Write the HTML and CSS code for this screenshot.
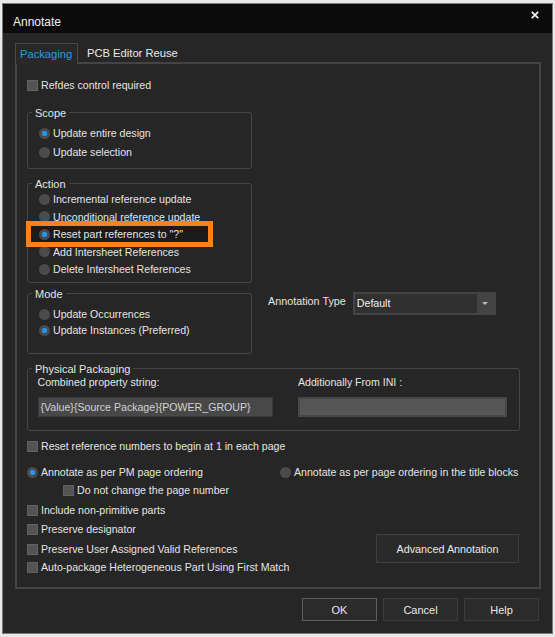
FILE: index.html
```html
<!DOCTYPE html>
<html>
<head>
<meta charset="utf-8">
<title>Annotate</title>
<link rel="stylesheet" href="styles.css">
</head>
<body>
<div class="dialog">
  <div class="titlebar">
    <span class="title">Annotate</span>
    <svg class="close" width="8" height="8" viewBox="0 0 8 8"><path d="M0.8 0.8 L7.2 7.2 M7.2 0.8 L0.8 7.2" stroke="#f2f2f2" stroke-width="1.7"/></svg>
  </div>
  <div class="dialog-body">
    <div class="tabs">
      <span class="tab active">Packaging</span>
      <span class="tab">PCB Editor Reuse</span>
    </div>
    <div class="panel">
      <div class="opt"><span class="check"></span>Refdes control required</div>

      <div class="group scope">
        <span class="group-title">Scope</span>
        <div class="opt"><span class="radio on"></span>Update entire design</div>
        <div class="opt"><span class="radio"></span>Update selection</div>
      </div>

      <div class="group action">
        <span class="group-title">Action</span>
        <div class="opt"><span class="radio"></span>Incremental reference update</div>
        <div class="opt"><span class="radio"></span>Unconditional reference update</div>
        <div class="opt highlight"><span class="radio on"></span>Reset part references to "?"</div>
        <div class="opt"><span class="radio"></span>Add Intersheet References</div>
        <div class="opt"><span class="radio"></span>Delete Intersheet References</div>
      </div>

      <div class="mode-row">
        <div class="group mode">
          <span class="group-title">Mode</span>
          <div class="opt"><span class="radio"></span>Update Occurrences</div>
          <div class="opt"><span class="radio on"></span>Update Instances (Preferred)</div>
        </div>
        <div class="anno-type">
          <span class="anno-label">Annotation Type</span>
          <div class="combo">
            <span class="combo-text">Default</span>
            <span class="combo-btn"><svg width="6" height="4" viewBox="0 0 6 4"><path d="M0 0 H6 L3 3 Z" fill="#b8b8b8"/></svg></span>
          </div>
        </div>
      </div>

      <div class="group physical">
        <span class="group-title">Physical Packaging</span>
        <div class="phys-grid">
          <span class="phys-label">Combined property string:</span>
          <span class="phys-label">Additionally From INI :</span>
          <div class="field">{Value}{Source Package}{POWER_GROUP}</div>
          <div class="field empty"></div>
        </div>
      </div>

      <div class="opt reset-row"><span class="check"></span>Reset reference numbers to begin at 1 in each page</div>

      <div class="order-row">
        <div class="opt"><span class="radio on"></span>Annotate as per PM page ordering</div>
        <div class="opt"><span class="radio"></span>Annotate as per page ordering in the title blocks</div>
      </div>
      <div class="opt sub-opt"><span class="check"></span>Do not change the page number</div>

      <div class="bottom-row">
        <div class="bottom-list">
          <div class="opt"><span class="check"></span>Include non-primitive parts</div>
          <div class="opt"><span class="check"></span>Preserve designator</div>
          <div class="opt"><span class="check"></span>Preserve User Assigned Valid References</div>
          <div class="opt"><span class="check"></span>Auto-package Heterogeneous Part Using First Match</div>
        </div>
        <div class="btn advanced">Advanced Annotation</div>
      </div>
    </div>

    <div class="buttons">
      <div class="btn default">OK</div>
      <div class="btn">Cancel</div>
      <div class="btn">Help</div>
    </div>
  </div>
</div>
</body>
</html>
```

FILE: styles.css
```css
body {
  margin: 0;
  background: #e9e9e9;
  font-family: "Liberation Sans", Arial, sans-serif;
  font-size: 10.6px;
  color: #e4e4e4;
}
.dialog {
  margin: 3px 0 0 2px;
  width: 551px;
  height: 631px;
  box-sizing: border-box;
  border: 1px solid #7a7a7a;
  background: #262626;
  display: flex;
  flex-direction: column;
}

/* title bar */
.titlebar {
  height: 29px;
  flex: none;
  background: #0b0b0b;
  display: flex;
  justify-content: space-between;
  align-items: flex-start;
  padding: 0 13px 0 10px;
}
.title {
  margin-top: 11px;
  font-size: 12px;
  line-height: 14px;
  color: #f0f0f0;
}
.close {
  margin-top: 7px;
}

.dialog-body {
  flex: 1;
  display: flex;
  flex-direction: column;
  padding: 10px 11px 0 12px;
}

/* tabs */
.tabs {
  display: flex;
  height: 21px;
  margin-bottom: -2px;
}
.tab {
  font-size: 11.2px;
  line-height: 14px;
  padding: 3px 6px 0 9px;
  color: #eaeaea;
}
.tab.active {
  position: relative;
  z-index: 1;
  width: 63px;
  box-sizing: border-box;
  padding: 3px 0 0 4px;
  background: #282828;
  border: 1px solid #4a4a4a;
  border-bottom: none;
  color: #2a9be3;
}
.panel {
  height: 527px;
  box-sizing: border-box;
  border: 2px solid #444444;
  padding: 13px 0 0 10px;
  display: flex;
  flex-direction: column;
}

/* checkboxes and radios */
.opt {
  display: flex;
  align-items: center;
  height: 16px;
  line-height: 16px;
  white-space: nowrap;
}
.check {
  width: 11px;
  height: 11px;
  box-sizing: border-box;
  margin-right: 3px;
  background: #545454;
  border: 1px solid #616161;
}
.radio {
  width: 11px;
  height: 11px;
  margin-right: 3px;
  border-radius: 50%;
  background: #4b4b4b;
}
.radio.on {
  background: radial-gradient(circle, #1d97f2 0 2.3px, #4b4b4b 3px);
}

/* group boxes */
.group {
  width: 225px;
  box-sizing: border-box;
  border: 1px solid #464646;
  border-radius: 3px;
  padding: 0 0 8px 11px;
  display: flex;
  flex-direction: column;
}
.group-title {
  align-self: flex-start;
  margin: -7px 0 0 -7px;
  padding: 0 3px;
  height: 14px;
  line-height: 14px;
  font-size: 11px;
  background: #262626;
}
.scope {
  margin-top: 19px;
}
.scope .opt:first-of-type {
  margin-top: 5px;
}
.scope .opt + .opt {
  margin-top: 3px;
}
.action {
  margin-top: 14px;
  padding-bottom: 5px;
}
.action .opt + .opt {
  margin-top: 1.5px;
}
.highlight {
  position: relative;
  z-index: 1;
  width: 177px;
  box-sizing: border-box;
  margin-left: -8px;
  padding-left: 8px;
  background: #1b1b1b;
  box-shadow: 0 0 0 5px #f7821f;
}

.mode-row {
  display: flex;
  align-items: flex-start;
  margin-top: 10px;
}
.mode {
  padding-bottom: 15px;
}
.mode .opt:first-of-type {
  margin-top: 5px;
}
.anno-type {
  display: flex;
  align-items: flex-start;
  margin: -1px 0 0 16px;
}
.anno-label {
  padding-top: 2px;
  line-height: 14px;
  font-size: 10.8px;
}
.combo {
  display: flex;
  width: 143px;
  height: 23px;
  box-sizing: border-box;
  margin-left: 7px;
  border: 2px solid #444444;
  background: #444444;
}
.combo-text {
  flex: 1;
  background: #303030;
  padding-left: 2px;
  line-height: 19px;
  color: #f0f0f0;
}
.combo-btn {
  width: 17px;
  display: flex;
  align-items: center;
  justify-content: center;
}

.physical {
  width: 493px;
  margin-top: 14px;
  padding: 0 0 13px 9.5px;
}
.physical .group-title {
  margin-left: -5.5px;
}
.phys-grid {
  display: grid;
  grid-template-columns: 235px 209px;
  column-gap: 25.5px;
  row-gap: 9px;
}
.phys-label {
  line-height: 12px;
}
.field {
  height: 20px;
  box-sizing: border-box;
  border: 1px solid #3a3a3a;
  background: #484848;
  padding-left: 2px;
  line-height: 18px;
  color: #d2d2d2;
  white-space: nowrap;
  overflow: hidden;
}
.field.empty {
  border: 2px solid #474747;
  background: #565656;
}

.reset-row {
  margin-top: 7px;
}
.order-row {
  display: grid;
  grid-template-columns: 253px auto;
  margin-top: 10px;
}
.sub-opt {
  margin: 2px 0 0 36px;
}
.bottom-row {
  display: flex;
  justify-content: space-between;
  align-items: flex-start;
  margin-top: 4px;
}
.bottom-list .opt:nth-child(2) {
  margin-top: 3px;
}
.bottom-list .opt:nth-child(3) {
  margin-top: 4px;
}
.bottom-list .opt:nth-child(4) {
  margin-top: 2px;
}

/* push buttons */
.btn {
  width: 75px;
  height: 23px;
  box-sizing: border-box;
  border: 1px solid #3c3c3c;
  background: #2b2b2b;
  display: flex;
  align-items: center;
  justify-content: center;
  font-size: 11px;
  color: #e8e8e8;
}
.btn.default {
  border-color: #5e5e5e;
}
.advanced {
  width: 143px;
  height: 29px;
  margin: 32px 20px 0 0;
  border-color: #3f3f3f;
  background: #2a2a2a;
  font-size: 10.8px;
}
.buttons {
  display: flex;
  justify-content: flex-end;
  gap: 6px;
  margin: 9px 2px 0 0;
}
```
